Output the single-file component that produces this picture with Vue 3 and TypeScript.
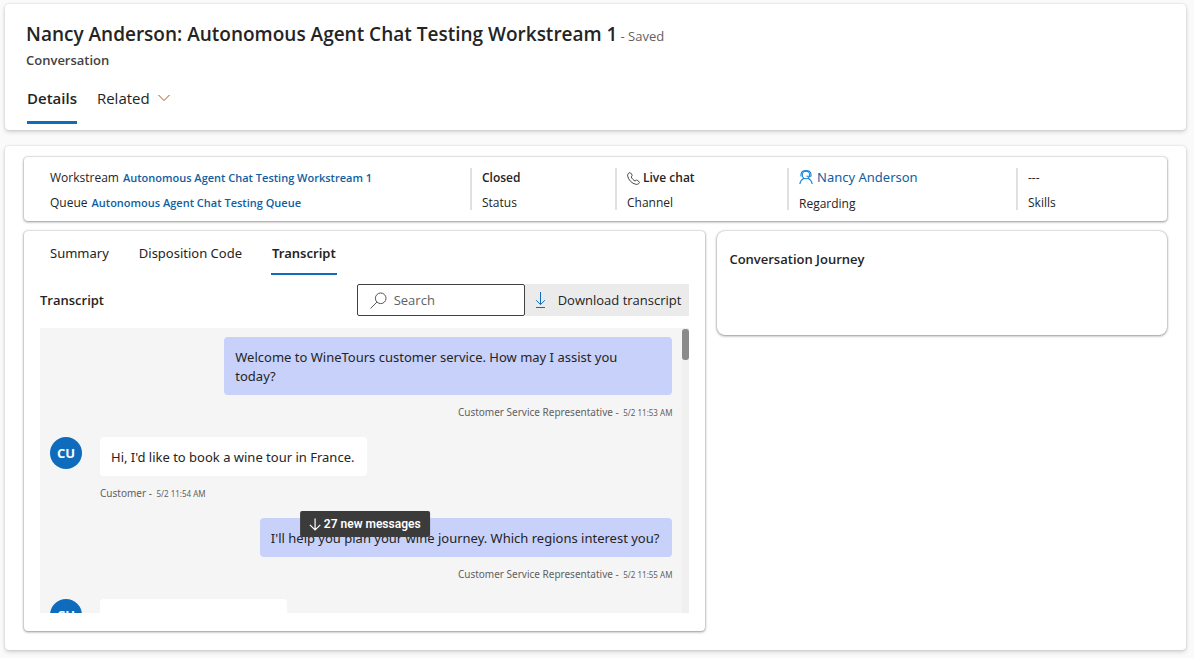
<script setup lang="ts">
import { ref } from 'vue'

interface Message {
  id: number
  from: 'agent' | 'customer'
  sender?: string
  time?: string
  text?: string
}

const search = ref('')
const activeTab = ref('Transcript')
const tabs: string[] = ['Summary', 'Disposition Code', 'Transcript']

const messages: Message[] = [
  {
    id: 1,
    from: 'agent',
    sender: 'Customer Service Representative',
    time: '5/2 11:53 AM',
    text: 'Welcome to WineTours customer service. How may I assist you today?',
  },
  {
    id: 2,
    from: 'customer',
    sender: 'Customer',
    time: '5/2 11:54 AM',
    text: "Hi, I'd like to book a wine tour in France.",
  },
  {
    id: 3,
    from: 'agent',
    sender: 'Customer Service Representative',
    time: '5/2 11:55 AM',
    text: "I'll help you plan your wine journey. Which regions interest you?",
  },
  { id: 4, from: 'customer' },
]
</script>

<template>
  <main class="page">
    <header class="card header">
      <div class="title-row">
        <h1>Nancy Anderson: Autonomous Agent Chat Testing Workstream 1</h1>
        <span class="saved">- Saved</span>
      </div>
      <p class="entity">Conversation</p>
      <nav class="main-tabs">
        <button type="button" class="main-tab selected">Details</button>
        <button type="button" class="main-tab">
          Related
          <svg width="12" height="12" viewBox="0 0 12 12" fill="none" stroke="#a8551c">
            <path d="M.5 3 6 8.500 11.500 3" />
          </svg>
        </button>
      </nav>
    </header>

    <section class="card body">
      <div class="panel facts">
        <div class="fact first">
          <p>Workstream <a href="#">Autonomous Agent Chat Testing Workstream 1</a></p>
          <p>Queue <a href="#">Autonomous Agent Chat Testing Queue</a></p>
        </div>
        <div class="fact">
          <p><b>Closed</b></p>
          <p>Status</p>
        </div>
        <div class="fact">
          <p class="channel">
            <svg width="13" height="13" viewBox="0 0 13 13" fill="none" stroke="#333" stroke-width=".9" stroke-linejoin="round">
              <path d="M2.200.8C1 1.500.4 2.700.7 4.100c.8 3.900 4.200 7.400 8.100 8.200 1.400.3 2.700-.2 3.500-1.400.3-.5.200-.9-.2-1.200L10.200 8.300c-.4-.3-.8-.3-1.200 0l-.9.7C6.400 8.200 5 6.700 4.200 4.900l.7-.8c.3-.4.300-.8.1-1.200L3.700 1C3.300.5 2.700.500 2.200.8Z" />
            </svg>
            <b>Live chat</b>
          </p>
          <p>Channel</p>
        </div>
        <div class="fact regarding">
          <p>
            <svg width="14" height="14" viewBox="0 0 14 14" fill="none" stroke="#1683d8" stroke-width="1.100">
              <circle cx="7" cy="5" r="3.700" />
              <path d="M.8 14C1.300 11 3 9.300 5 8.300M13.200 14C12.700 11 11 9.300 9 8.300M2 6.500V4.200C2.300 2 4.300.6 7 .6s4.700 1.400 5 3.600v2.300M12 6.300H7.500" />
            </svg>
            <a href="#">Nancy Anderson</a>
          </p>
          <p>Regarding</p>
        </div>
        <div class="fact">
          <p>---</p>
          <p>Skills</p>
        </div>
      </div>

      <div class="columns">
        <section class="panel conversation">
          <nav class="sub-tabs">
            <button
              v-for="tab in tabs"
              :key="tab"
              type="button"
              class="sub-tab"
              :class="{ selected: tab === activeTab }"
              @click="activeTab = tab"
            >
              {{ tab }}
            </button>
          </nav>

          <div class="toolbar">
            <h2>Transcript</h2>
            <label class="search">
              <svg width="17" height="17" viewBox="0 0 17 17" fill="none" stroke="#555">
                <circle cx="10.700" cy="6.300" r="5.300" />
                <path d="M6.900 10.100.5 16.500" />
              </svg>
              <input v-model="search" type="text" placeholder="Search" aria-label="Search" />
            </label>
            <button type="button" class="download">
              <svg width="11" height="16" viewBox="0 0 11 16" fill="none" stroke="#0f6cbd">
                <path d="M5.500 0V12.500M1.100 8.200 5.500 12.600 9.900 8.200M1 15.500H10" />
              </svg>
              Download transcript
            </button>
          </div>

          <div class="chat">
            <div class="messages">
              <article v-for="m in messages" :key="m.id" class="message" :class="m.from">
                <span v-if="m.from === 'customer'" class="avatar">CU</span>
                <div class="content">
                  <p class="bubble" :class="{ pending: !m.text }">{{ m.text }}</p>
                  <p v-if="m.sender" class="caption">
                    {{ m.sender }} - <small>{{ m.time }}</small>
                  </p>
                </div>
              </article>
            </div>
            <div class="scrollbar"><div class="thumb"></div></div>
            <button type="button" class="new-messages">
              <svg width="12" height="13" viewBox="0 0 12 13" fill="none" stroke="#fff" stroke-width="1.200">
                <path d="M6 .5V12M.8 6.800 6 12 11.200 6.800" />
              </svg>
              27 new messages
            </button>
          </div>
        </section>

        <section class="panel journey">
          <h2>Conversation Journey</h2>
        </section>
      </div>
    </section>
  </main>
</template>

<style>
body {
  margin: 0;
  background: #fafafa;
}
</style>

<style scoped>
.page {
  display: flex;
  flex-direction: column;
  gap: 16px;
  padding: 4px 8px 8px 5px;
  color: #242424;
  font-family: "Segoe UI", "Open Sans", "Noto Sans", sans-serif;
  font-size: 12px;
}
h1,
h2,
p {
  margin: 0;
}
h2 {
  font-size: 13px;
  line-height: 20px;
  font-weight: 600;
}
b {
  font-weight: 600;
}
button {
  border: 0;
  padding: 0;
  background: none;
  color: inherit;
  font-family: inherit;
  cursor: pointer;
}
svg {
  flex: none;
}
a {
  color: #115ea3;
  text-decoration: none;
}
.card {
  background: #fff;
  border-radius: 4px;
  box-shadow: 0 0 2px rgba(0, 0, 0, 0.16), 0 2px 4px rgba(0, 0, 0, 0.16);
}
.header {
  padding: 16px 21px 6px;
}
.title-row {
  display: flex;
  align-items: baseline;
  gap: 3px;
}
h1 {
  font-size: 19px;
  line-height: 28px;
  font-weight: 600;
}
.saved {
  color: #616161;
  font-size: 13px;
}
.entity {
  color: #424242;
  font-size: 13px;
  line-height: 24px;
  font-weight: 600;
}
.main-tabs {
  display: flex;
  gap: 20px;
  margin-top: 8px;
  padding-left: 1px;
}
.main-tab {
  display: flex;
  align-items: center;
  gap: 8px;
  height: 44px;
  padding-bottom: 6px;
  border-bottom: 3px solid transparent;
  font-size: 15px;
}
.main-tab.selected {
  font-weight: 600;
  border-color: #0f6cbd;
}
.body {
  display: flex;
  flex-direction: column;
  gap: 10px;
  padding: 11px 19px 19px;
}
.panel {
  background: #fff;
  border-radius: 4px;
  box-shadow: 0 0 2px rgba(0, 0, 0, 0.3), 0 1px 3px rgba(0, 0, 0, 0.36);
}
.facts {
  display: grid;
  grid-template-columns: 420fr 145fr 172fr 229fr 151fr;
  padding: 11px 0 11px 26px;
}
.fact {
  box-sizing: border-box;
  display: flex;
  flex-direction: column;
  gap: 7px;
  height: 42px;
  padding: 1px 0 0 10px;
  border-left: 2px solid #e0e0e0;
  line-height: 18px;
  white-space: nowrap;
}
.fact.first {
  padding-left: 0;
  border-left: 0;
}
.first a {
  font-size: 11px;
  font-weight: 600;
}
.fact p {
  display: flex;
  align-items: center;
  gap: 4px;
}
.fact .channel {
  gap: 3px;
}
.regarding {
  gap: 9px;
  padding-top: 0;
}
.regarding a {
  font-family: "Segoe UI", "Noto Sans", "Open Sans", sans-serif;
  font-size: 13px;
}
.columns {
  display: grid;
  grid-template-columns: 682fr 450fr;
  gap: 12px;
  align-items: start;
}
.conversation {
  padding: 0 16px 18px;
}
.sub-tabs {
  display: flex;
  gap: 28px;
  padding: 0 9px;
}
.sub-tab {
  height: 44px;
  padding: 1px 1px 0;
  border-bottom: 2px solid transparent;
  font-family: "Segoe UI", "Noto Sans", "Open Sans", sans-serif;
  font-size: 13px;
}
.sub-tab.selected {
  font-weight: 600;
  border-color: #0f6cbd;
}
.toolbar {
  display: flex;
  align-items: center;
  margin: 9px 0 12px;
}
.toolbar h2 {
  flex: 1;
}
.search {
  display: flex;
  align-items: center;
  gap: 7px;
  box-sizing: border-box;
  width: 168px;
  height: 32px;
  padding: 0 12px;
  border: 1px solid #424242;
  border-radius: 2px;
}
.search input {
  flex: 1;
  min-width: 0;
  border: 0;
  outline: 0;
  padding: 0;
  background: none;
  color: inherit;
  font: 13px "Segoe UI", "Open Sans", "Noto Sans", sans-serif;
}
.search input::placeholder {
  color: #616161;
  opacity: 1;
}
.download {
  display: flex;
  align-items: center;
  gap: 12px;
  height: 32px;
  padding: 0 8px 0 10px;
  background: #ebebeb;
  font-size: 13px;
}
.chat {
  position: relative;
  display: flex;
  height: 285px;
  overflow: hidden;
  background: #f5f5f5;
}
.messages {
  flex: 1;
  display: flex;
  flex-direction: column;
  gap: 16px;
  padding: 9px 10px 0;
}
.message {
  display: flex;
  gap: 18px;
}
.content {
  display: flex;
  flex-direction: column;
  align-items: flex-start;
  flex: 1;
}
.agent .content {
  align-items: flex-end;
}
.avatar {
  flex: none;
  width: 32px;
  height: 32px;
  border-radius: 50%;
  background: #0f6cbd;
  color: #fff;
  font-size: 13px;
  line-height: 32px;
  font-weight: 700;
  text-align: center;
}
.bubble {
  box-sizing: border-box;
  max-width: 72%;
  padding: 11px 13px 9px 11px;
  border-radius: 4px;
  background: #fff;
  font-family: "Segoe UI", "Noto Sans", "Open Sans", sans-serif;
  font-size: 13px;
  line-height: 19px;
}
.agent .bubble {
  background: #c8d1fa;
}
.bubble.pending {
  width: 187px;
  height: 39px;
}
.caption {
  margin-top: 8px;
  color: #616161;
  font-family: "Segoe UI", "Noto Sans", "Open Sans", sans-serif;
  font-size: 10px;
  line-height: 18px;
}
.caption small {
  margin-left: 2px;
  font-size: 8px;
  line-height: 8px;
}
.scrollbar {
  width: 7px;
  padding-top: 1px;
  background: #f0f0f0;
}
.thumb {
  height: 31px;
  border-radius: 3px;
  background: #8a8a8a;
}
.new-messages {
  position: absolute;
  bottom: 76px;
  left: 50%;
  transform: translateX(-50%);
  display: flex;
  align-items: center;
  gap: 3px;
  height: 26px;
  padding: 0 9px;
  border-radius: 2px;
  background: #3b3b3b;
  color: #fff;
  font: 600 12px Roboto, "Liberation Sans", Arial, sans-serif;
  white-space: nowrap;
}
.journey {
  min-height: 86px;
  padding: 18px 12px 0;
  border-radius: 8px;
}
</style>
